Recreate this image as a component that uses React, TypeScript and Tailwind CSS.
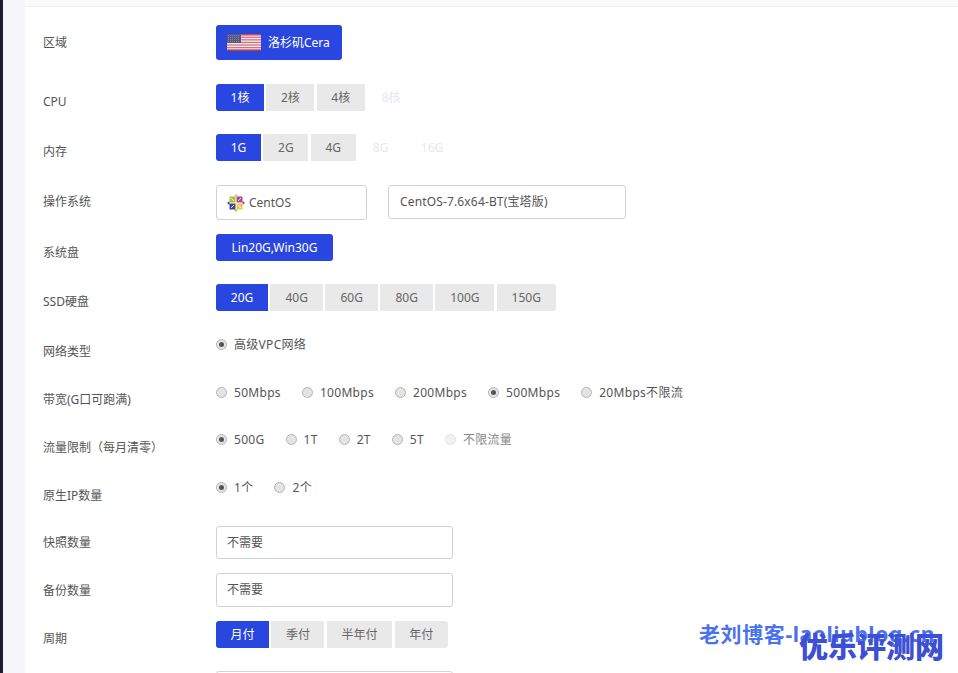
const FONT = "font-['Noto_Sans','Noto_Sans_CJK_SC',sans-serif]"

const FlagIcon = () => (
    <svg width="34" height="17" viewBox="0 0 34 17" className="shrink-0">
        <rect width="34" height="17" fill="#f4f0f0" />
        <rect y="0" width="34" height="1.5" fill="#c8475a" />
        <rect y="2.6" width="34" height="1.3" fill="#d3707f" />
        <rect y="5.2" width="34" height="1.3" fill="#d3707f" />
        <rect y="7.8" width="34" height="1.3" fill="#d3707f" />
        <rect y="10.4" width="34" height="1.3" fill="#d3707f" />
        <rect y="13" width="34" height="1.3" fill="#d3707f" />
        <rect y="15.4" width="34" height="1.6" fill="#b8384c" />
        <rect width="14" height="9" fill="#565a80" />
        <path d="M1 1.5h12M1 3.5h12M1 5.5h12M1 7.5h12" stroke="#8f92ad" strokeWidth="0.7" strokeDasharray="1 1" />
    </svg>
)

const CentosIcon = () => (
    <svg width="18" height="18" viewBox="0 0 18 18" className="shrink-0">
        <path d="M9 0l2 2.500H7z" fill="#e8c34a" />
        <path d="M18 9l-2.500 2V7z" fill="#a13a8e" />
        <path d="M9 18l-2-2.500h4z" fill="#a5c63b" />
        <path d="M0 9l2.500-2v4z" fill="#3d3f8f" />
        <rect x="2.500" y="2.500" width="6" height="6" fill="#a5c63b" />
        <rect x="9.500" y="2.500" width="6" height="6" fill="#b0488f" />
        <rect x="2.500" y="9.500" width="6" height="6" fill="#42458f" />
        <rect x="9.500" y="9.500" width="6" height="6" fill="#f0c64f" />
        <path d="M4 4l3 3M14 4l-3 3M4 14l3-3M14 14l-3-3" stroke="#fff" strokeWidth="0.8" />
    </svg>
)

const Label = ({ text, className }: { text: string; className: string }) => (
    <div className={`w-[191px] shrink-0 pl-[18px] text-[12px] leading-5 text-[#555] ${className}`}>{text}</div>
)

const Option = ({ text, w, active, ghost }: { text: string; w: string; active?: boolean; ghost?: boolean }) => {
    let color = 'bg-[#e9e9e9] text-[#666]'
    if (active) color = 'bg-[#2a46e0] text-white rounded-l-[3px]'
    if (ghost) color = 'text-[#e6e7f2]'
    return <div className={`flex h-[27px] items-center justify-center text-[12px] ${w} ${color}`}>{text}</div>
}

const Radio = ({ text, checked, off }: { text: string; checked?: boolean; off?: boolean }) => (
    <div className={`flex h-5 items-center gap-[7px] pt-px text-[12px] tracking-[0.3px] ${off ? 'text-[#888]' : 'text-[#555]'}`}>
        <span
            className={`flex h-[11px] w-[11px] items-center justify-center rounded-full border ${
                off ? 'border-[#e2e2e2] bg-[#f2f2f2]' : 'border-[#b5b5b5] bg-[#e4e4e4]'
            }`}
        >
            {checked && <span className="h-[5px] w-[5px] rounded-full bg-[#555]" />}
        </span>
        {text}
    </div>
)

const Field = ({ text, h = 'h-[33px]' }: { text: string; h?: string }) => (
    <div className={`flex w-[237px] items-center rounded-[3px] border border-[#ced2de] bg-white pl-[10px] text-[12px] text-[#555] ${h}`}>
        {text}
    </div>
)

const App = () => {
    return (
        <div className={`flex h-[673px] w-[958px] overflow-hidden bg-[#f5f5fa] ${FONT}`}>
            <div className="w-[3px] shrink-0 bg-[#1e1e2d]" />
            <div className="relative ml-[22px] flex grow flex-col">
                <div className="h-[7px] shrink-0 border-b border-[#eeeef6] bg-[#fafafb]" />
                <div className="grow bg-white pt-[18px]">
                    <div className="flex h-[59px]">
                        <Label text="区域" className="pt-[8px]" />
                        <div className="flex h-[35px] w-[126px] items-center gap-[7px] rounded-[3px] bg-[#2a46e0] pl-[11px] text-[12px] text-white">
                            <FlagIcon />
                            洛杉矶Cera
                        </div>
                    </div>

                    <div className="flex h-[50px]">
                        <Label text="CPU" className="pt-[8px]" />
                        <div className="flex gap-[2.400px]">
                            <Option text="1核" w="w-[48px]" active />
                            <Option text="2核" w="w-[48px]" />
                            <Option text="4核" w="w-[48px]" />
                            <Option text="8核" w="w-[48px]" ghost />
                        </div>
                    </div>

                    <div className="flex h-[51px]">
                        <Label text="内存" className="pt-[8px]" />
                        <div className="flex gap-[2.400px]">
                            <Option text="1G" w="w-[45px]" active />
                            <Option text="2G" w="w-[45px]" />
                            <Option text="4G" w="w-[45px]" />
                            <Option text="8G" w="w-[45px]" ghost />
                            <Option text="16G" w="w-[53px]" ghost />
                        </div>
                    </div>

                    <div className="flex h-[49px]">
                        <Label text="操作系统" className="pt-[7px]" />
                        <div className="flex h-[35px] w-[151px] items-center gap-[4px] rounded-[3px] border border-[#ced2de] pl-[10px] text-[12px] text-[#555]">
                            <CentosIcon />
                            CentOS
                        </div>
                        <div className="ml-[21px] flex h-[34px] w-[238px] items-center rounded-[3px] border border-[#ced2de] pl-[11px] text-[12px] tracking-[0.15px] text-[#555]">
                            CentOS-7.6x64-BT(宝塔版)
                        </div>
                    </div>

                    <div className="flex h-[50px]">
                        <Label text="系统盘" className="pt-[9px]" />
                        <Option text="Lin20G,Win30G" w="w-[117px] rounded-[3px]" active />
                    </div>

                    <div className="flex h-[50px]">
                        <Label text="SSD硬盘" className="pt-[8px]" />
                        <div className="flex gap-[2.400px]">
                            <Option text="20G" w="w-[52px]" active />
                            <Option text="40G" w="w-[52.600px]" />
                            <Option text="60G" w="w-[52.600px]" />
                            <Option text="80G" w="w-[52.600px]" />
                            <Option text="100G" w="w-[59px]" />
                            <Option text="150G" w="w-[59px] rounded-r-[3px]" />
                        </div>
                    </div>

                    <div className="flex h-[48px]">
                        <Label text="网络类型" className="pt-[8px]" />
                        <Radio text="高级VPC网络" checked />
                    </div>

                    <div className="flex h-[47px]">
                        <Label text="带宽(G口可跑满)" className="pt-[8px]" />
                        <div className="flex gap-[21px]">
                            <Radio text="50Mbps" />
                            <Radio text="100Mbps" />
                            <Radio text="200Mbps" />
                            <Radio text="500Mbps" checked />
                            <Radio text="20Mbps不限流" />
                        </div>
                    </div>

                    <div className="flex h-[48px]">
                        <Label text="流量限制（每月清零）" className="pt-[9px]" />
                        <div className="flex gap-[21px]">
                            <Radio text="500G" checked />
                            <Radio text="1T" />
                            <Radio text="2T" />
                            <Radio text="5T" />
                            <Radio text="不限流量" off />
                        </div>
                    </div>

                    <div className="flex h-[49px]">
                        <Label text="原生IP数量" className="pt-[9px]" />
                        <div className="flex gap-[21px]">
                            <Radio text="1个" checked />
                            <Radio text="2个" />
                        </div>
                    </div>

                    <div className="flex h-[47px]">
                        <Label text="快照数量" className="pt-[7px]" />
                        <Field text="不需要" />
                    </div>

                    <div className="flex h-[48px]">
                        <Label text="备份数量" className="pt-[8px]" />
                        <Field text="不需要" h="h-[34px]" />
                    </div>

                    <div className="flex h-[50px]">
                        <Label text="周期" className="pt-[8px]" />
                        <div className="flex gap-[2.400px]">
                            <Option text="月付" w="w-[53px]" active />
                            <Option text="季付" w="w-[53px]" />
                            <Option text="半年付" w="w-[65.500px]" />
                            <Option text="年付" w="w-[53px] rounded-r-[3px]" />
                        </div>
                    </div>

                    <div className="flex">
                        <div className="w-[191px] shrink-0" />
                        <Field text="" />
                    </div>
                </div>

                <div className="absolute left-[674px] top-[622px] text-[21px] font-bold leading-6 tracking-[0.6px] whitespace-nowrap text-[#4a72f0]">
                    老刘博客-laoliublog.cn
                </div>
                <div className="absolute left-[774px] top-[629px] text-[29px] font-black leading-9 whitespace-nowrap text-[#3d4fd2]">
                    优乐评测网
                </div>
            </div>
        </div>
    )
}

export default App
